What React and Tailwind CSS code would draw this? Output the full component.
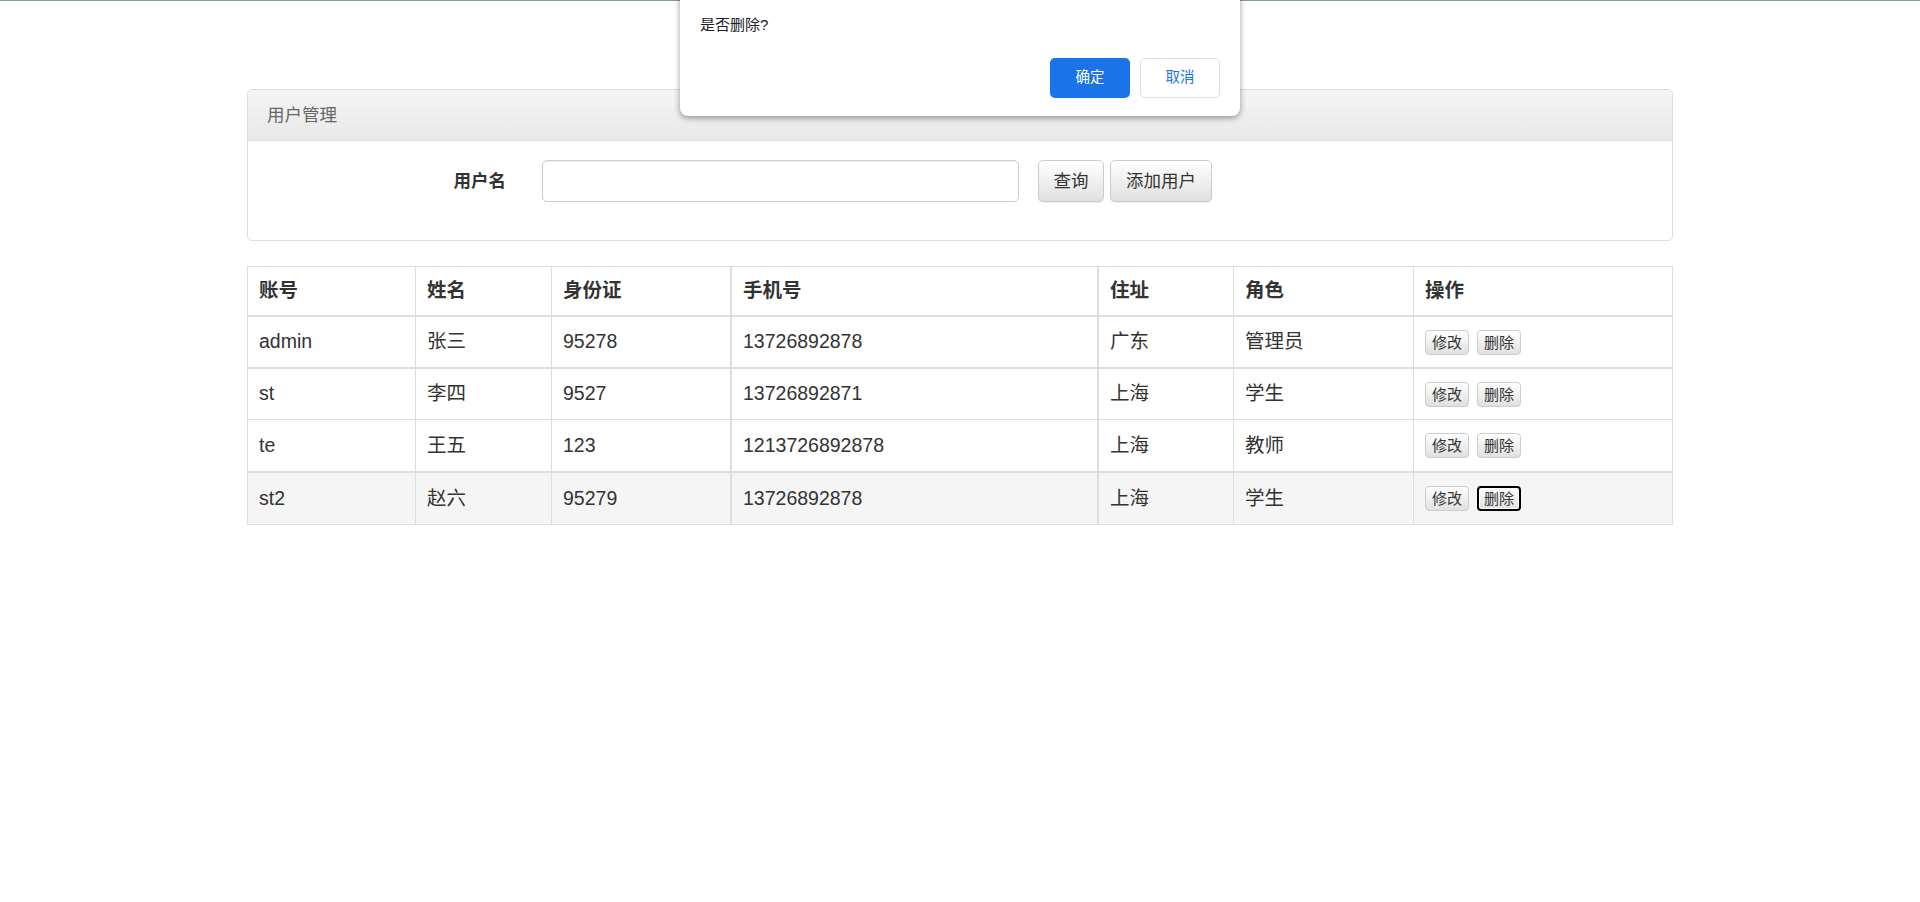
import React from "react";

const FONT = { fontFamily: '"Liberation Sans", "Noto Sans CJK SC", sans-serif' };

const users = [
  { account: "admin", name: "张三", idcard: "95278", phone: "13726892878", addr: "广东", role: "管理员" },
  { account: "st", name: "李四", idcard: "9527", phone: "13726892871", addr: "上海", role: "学生" },
  { account: "te", name: "王五", idcard: "123", phone: "1213726892878", addr: "上海", role: "教师" },
  { account: "st2", name: "赵六", idcard: "95279", phone: "13726892878", addr: "上海", role: "学生" },
];

// row heights / bottom borders follow the zoomed page rendering
const rowStyles = [
  "h-[52px] border-b-2",
  "h-[51px] border-b",
  "h-[53px] border-b-2",
  "h-[51px] bg-[#f5f5f5]",
];

const gridCols = "grid grid-cols-[168px_136px_180px_367px_135px_180px_1fr]";

function Cell({ children, idx, className = "" }) {
  const right =
    idx === 6 ? "" : idx === 2 || idx === 3 ? "border-r-2 border-[#ddd]" : "border-r border-[#ddd]";
  return (
    <div className={`flex items-center pl-[11px] ${right} ${className}`}>{children}</div>
  );
}

function SmallBtn({ children, focused }) {
  return (
    <button
      className={`h-[25px] w-[44px] rounded-[4px] bg-linear-to-b from-white to-[#e0e0e0] text-[15px] leading-[21px] text-[#333] ${
        focused
          ? "border-2 border-black shadow-[inset_0_0_0_1px_#fff]"
          : "border border-[#ccc]"
      }`}
    >
      {children}
    </button>
  );
}

function BigBtn({ children, className = "" }) {
  return (
    <button
      className={`h-[42px] rounded-[5px] border border-[#ccc] bg-linear-to-b from-white to-[#e0e0e0] text-[17.5px] text-[#333] shadow-[0_1px_1px_rgba(0,0,0,0.075)] ${className}`}
    >
      {children}
    </button>
  );
}

export default function App() {
  return (
    <div className="relative min-h-[902px] bg-white text-[#333]" style={FONT}>
      <div className="h-px w-full bg-[#7f9c9c]" />

      <div className="mx-auto w-[1426px] pt-[88px]">
        {/* panel */}
        <div className="rounded-[5px] border border-[#ddd]">
          <div className="flex h-[51px] items-center rounded-t-[5px] border-b border-[#ddd] bg-linear-to-b from-[#f5f5f5] to-[#e8e8e8] px-[19px] text-[17.5px] text-[#666]">
            用户管理
          </div>
          <div className="flex h-[99px] items-start pt-[19px]">
            <div className="flex h-[42px] w-[258px] items-center justify-end text-[17.5px] font-bold text-[#333]">
              用户名
            </div>
            <input
              className="ml-[36px] h-[42px] w-[477px] rounded-[5px] border border-[#ccc] bg-white px-3 shadow-[inset_0_1px_1px_rgba(0,0,0,0.075)] outline-none"
              type="text"
            />
            <BigBtn className="ml-[19px] w-[66px]">查询</BigBtn>
            <BigBtn className="ml-[6px] w-[102px]">添加用户</BigBtn>
          </div>
        </div>

        {/* table */}
        <div className="mt-[25px] border border-[#ddd] text-[19.5px]">
          <div className={`${gridCols} h-[50px] border-b-2 border-[#ddd] font-bold`}>
            {["账号", "姓名", "身份证", "手机号", "住址", "角色", "操作"].map((h, i) => (
              <Cell key={h} idx={i}>
                {h}
              </Cell>
            ))}
          </div>
          {users.map((u, r) => (
            <div key={u.account} className={`${gridCols} border-[#ddd] ${rowStyles[r]}`}>
              <Cell idx={0}>{u.account}</Cell>
              <Cell idx={1}>{u.name}</Cell>
              <Cell idx={2}>{u.idcard}</Cell>
              <Cell idx={3}>{u.phone}</Cell>
              <Cell idx={4}>{u.addr}</Cell>
              <Cell idx={5}>{u.role}</Cell>
              <Cell idx={6} className="gap-[8px]">
                <SmallBtn>修改</SmallBtn>
                <SmallBtn focused={r === 3}>删除</SmallBtn>
              </Cell>
            </div>
          ))}
        </div>
      </div>

      {/* confirm dialog */}
      <div className="absolute left-[680px] top-[-10px] h-[126px] w-[560px] rounded-[8px] bg-white shadow-[0_2px_6px_rgba(0,0,0,0.4)]">
        <div className="pl-[20px] pt-[24px] text-[15px] leading-[22px] text-[#202124]">是否删除?</div>
        <div className="mt-[22px] flex justify-end gap-[10px] pr-[20px]">
          <button className="h-[40px] w-[80px] rounded-[5px] bg-[#1a73e8] text-[14.5px] text-white">
            确定
          </button>
          <button className="h-[40px] w-[80px] rounded-[5px] border border-[#dadce0] bg-white text-[14.5px] text-[#1a73e8]">
            取消
          </button>
        </div>
      </div>
    </div>
  );
}
